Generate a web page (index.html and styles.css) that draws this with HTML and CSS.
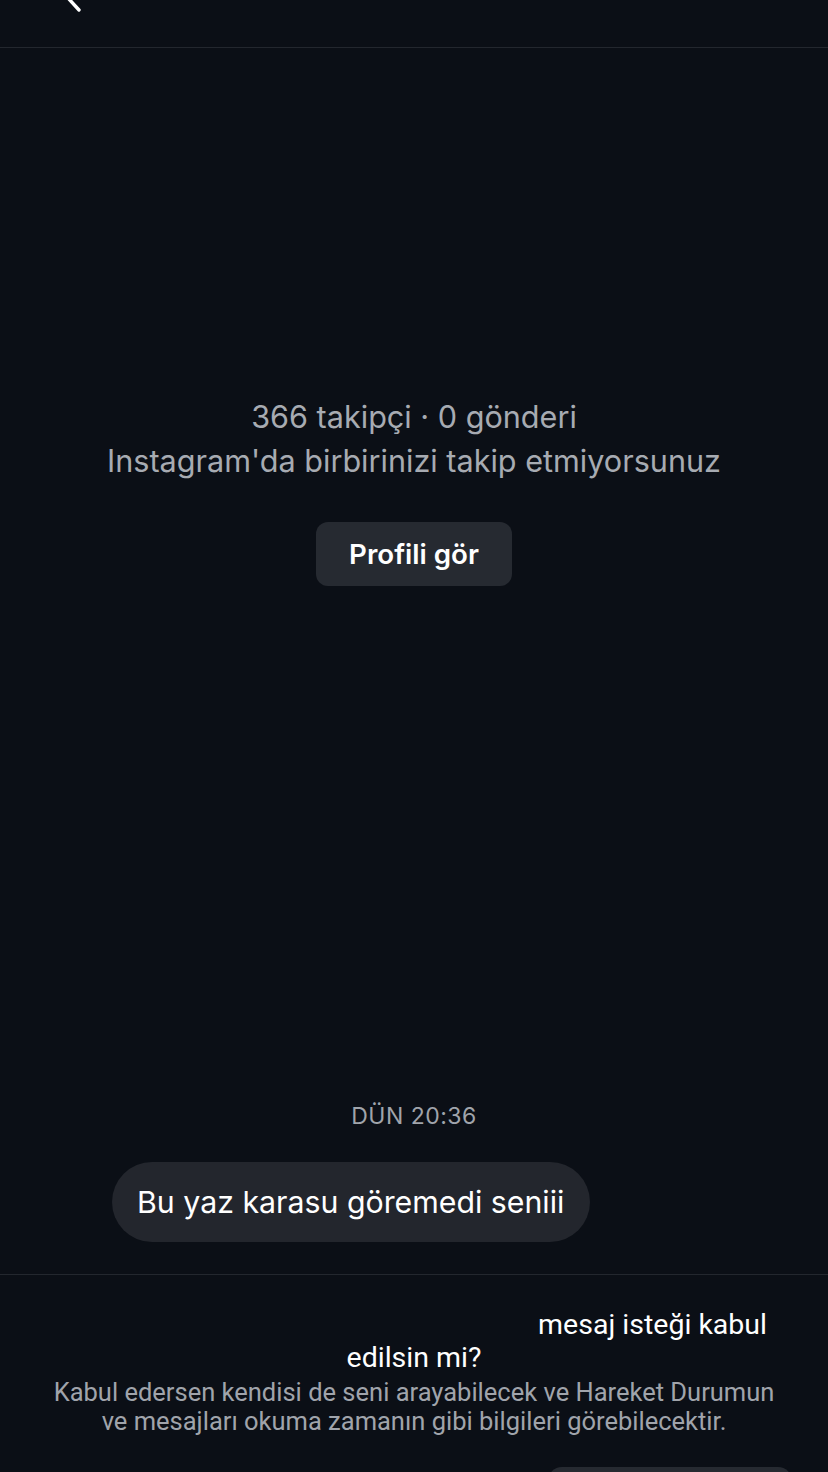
FILE: index.html
```html
<!DOCTYPE html>
<html lang="tr">
<head>
    <meta charset="UTF-8">
    <title>Mesaj isteği</title>
    <link rel="stylesheet" href="styles.css">
</head>
<body>
<div class="header">
    <svg class="back" width="24" height="16" viewBox="0 0 24 16">
        <path d="M6 -2 L17 10" stroke="#fff" stroke-width="3.4" stroke-linecap="round" fill="none"/>
    </svg>
</div>
<div class="main">
    <div class="profile">
        <p class="stats">366 takipçi · 0 gönderi</p>
        <p class="stats">Instagram'da birbirinizi takip etmiyorsunuz</p>
        <div class="btn-profile">Profili gör</div>
    </div>
    <div class="chat">
        <div class="time">DÜN 20:36</div>
        <div class="bubble">Bu yaz karasu göremedi seniii</div>
    </div>
</div>
<div class="footer">
    <div class="title-1">mesaj isteği kabul</div>
    <div class="title-2">edilsin mi?</div>
    <p class="desc">Kabul edersen kendisi de seni arayabilecek ve Hareket Durumun<br>ve mesajları okuma zamanın gibi bilgileri görebilecektir.</p>
    <div class="actions">
        <div class="btn-accept"></div>
    </div>
</div>
</body>
</html>
```

FILE: styles.css
```css
*{
    margin:0;
    padding:0;
    box-sizing:border-box;
}
html,body{
    background:#0b0f16;
    height:100%;
    overflow:hidden;
}
body{
    font-family:Inter,"Noto Sans",sans-serif;
    color:#fff;
}
.header{
    height:48px;
    border-bottom:1px solid #23272e;
}
.back{
    display:block;
    margin-left:62px;
}
.main{
    height:1227px;
    display:flex;
    flex-direction:column;
    border-bottom:1px solid #23272e;
}
.profile{
    padding-top:347px;
    display:flex;
    flex-direction:column;
    align-items:center;
}
.stats{
    font-size:30.6px;
    line-height:44px;
    color:#a7abb2;
    text-align:center;
}
.btn-profile{
    margin-top:39px;
    width:196px;
    height:64px;
    line-height:64px;
    border-radius:12px;
    background:#262a31;
    text-align:center;
    font-size:27.7px;
    font-weight:600;
}
.chat{
    margin-top:auto;
    padding-bottom:32px;
}
.time{
    text-align:center;
    font-size:23px;
    line-height:30px;
    color:#a0a4ab;
    letter-spacing:0.5px;
    margin-bottom:31px;
}
.bubble{
    margin-left:112px;
    display:inline-block;
    height:80px;
    line-height:80px;
    padding:0 26px 0 25px;
    border-radius:40px;
    background:#23262d;
    font-size:30.3px;
}
.footer{
    padding-top:33px;
    font-family:Roboto,"Noto Sans",sans-serif;
}
.title-1{
    text-align:right;
    padding-right:61px;
    font-size:28.5px;
    line-height:33px;
}
.title-2{
    text-align:center;
    font-size:28.5px;
    line-height:33px;
}
.desc{
    margin-top:4px;
    text-align:center;
    font-size:25.5px;
    line-height:29px;
    color:#a0a4ab;
}
.actions{
    margin-top:31px;
    display:flex;
    justify-content:flex-end;
    padding-right:36px;
}
.btn-accept{
    width:244px;
    height:60px;
    border-radius:14px;
    background:#262a31;
}
```
